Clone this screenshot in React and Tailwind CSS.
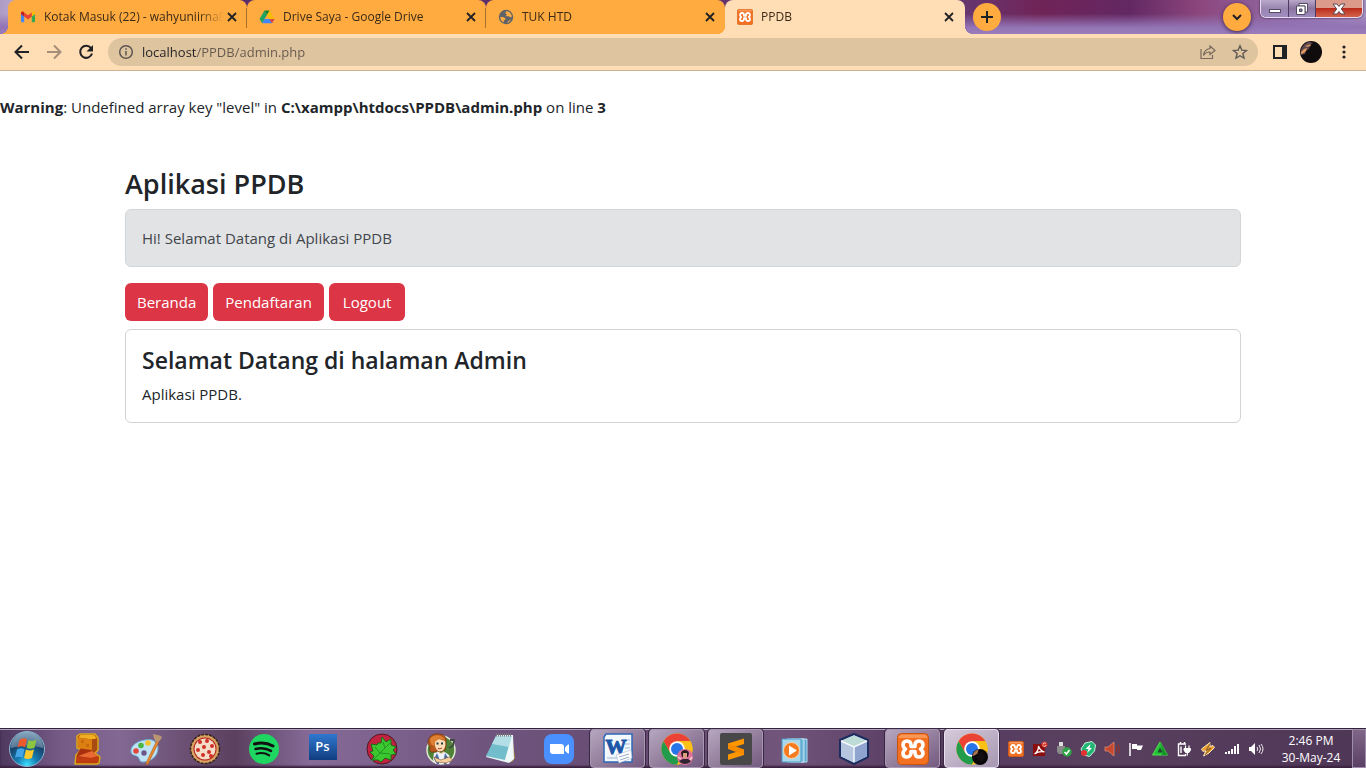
import React, { useState } from "react";

const TABS = [
  { id: 1, title: "Kotak Masuk (22) - wahyuniirna8", icon: GmailIcon },
  { id: 2, title: "Drive Saya - Google Drive", icon: DriveIcon },
  { id: 3, title: "TUK HTD", icon: GlobeIcon },
  { id: 4, title: "PPDB", icon: XamppIcon },
];

const APPS = [
  { name: "Game", icon: BlockIcon },
  { name: "Paint", icon: PaintIcon },
  { name: "Pizza", icon: PizzaIcon },
  { name: "Spotify", icon: SpotifyIcon },
  { name: "Photoshop", icon: PhotoshopIcon },
  { name: "Leaf", icon: LeafIcon },
  { name: "Dash", icon: GirlIcon },
  { name: "Notepad", icon: NotepadIcon },
  { name: "Zoom", icon: ZoomIcon },
  { name: "Word", icon: WordIcon, open: true },
  { name: "Chrome profile 1", icon: ChromePink, open: true },
  { name: "Sublime Text", icon: SublimeIcon, open: true },
  { name: "Media Player", icon: PlayerIcon },
  { name: "VirtualBox", icon: CubeIcon },
  { name: "XAMPP", icon: XamppIcon, open: true },
  { name: "Chrome profile 2", icon: ChromeDark, open: true, active: true },
];

const TRAY = [
  { name: "XAMPP", icon: XamppIcon },
  { name: "Acrobat", icon: AcrobatIcon },
  { name: "USB", icon: UsbIcon },
  { name: "Antivirus", icon: ShieldIcon },
  { name: "Audio manager", icon: RedSpeakerIcon },
  { name: "Action center", icon: FlagIcon },
  { name: "Triangle", icon: TriangleIcon },
  { name: "Power", icon: PlugIcon },
  { name: "Winamp", icon: BoltIcon },
  { name: "Network", icon: SignalIcon },
  { name: "Volume", icon: VolumeIcon },
];

function GmailIcon({ className }) {
  return (
    <svg viewBox="0 0 16 16" className={className}>
      <path d="M1 4v8.300c0 .5.4.9.9.9h2.300V7.300z" fill="#4285f4" />
      <path d="M11.800 7.300v5.900h2.300c.5 0 .9-.4.9-.9V4z" fill="#34a853" />
      <path d="M11.800 4v3.600L15 5.200V4c0-1.300-1.500-2-2.500-1.200z" fill="#fbbc04" />
      <path d="M4.200 7.600V3.500L8 6.300l3.800-2.800v4.100L8 10.400z" fill="#ea4335" />
      <path d="M1 4v1.200l3.200 2.400V3.500l-.7-.7C2.500 2 1 2.700 1 4z" fill="#c5221f" />
    </svg>
  );
}

function DriveIcon({ className }) {
  return (
    <svg viewBox="0 0 16 16" className={className}>
      <path d="M5.500 1.500h5l5 8.500h-5z" fill="#fbbc04" />
      <path d="M5.500 1.500L8 5.800 3.200 14.300 .5 10z" fill="#1ea362" />
      <path d="M5.500 1.500h5L8 5.800z" fill="#188038" />
      <path d="M5.500 10h10l-2.600 4.300H3.100z" fill="#4285f4" />
      <path d="M10.500 10h5l-2.600 4.300z" fill="#ea4335" />
    </svg>
  );
}

function GlobeIcon({ className }) {
  return (
    <svg viewBox="0 0 16 16" className={className}>
      <circle cx="8" cy="8" r="7.200" fill="#5f6368" />
      <path d="M2.300 8c2.400-.2 4.300.3 5 1.500.5 1-.2 1.600-1.400 1.700-.3.900.1 1.800-.4 2.200C3.600 12.500 2.200 10.500 2.300 8z" fill="#ffab40" />
      <path d="M8.300 2.200c2.900 0 5.300 2.300 5.500 5.300-.9 1.200-2 1-2.600 0-.8-.6-2.400.3-3-.6-.4-.8.700-1 .4-1.700-.4-.700-1.300-.6-1.200-1.500z" fill="#ffab40" />
      <path d="M9.500 13.800c-.3-.9.500-1.300 1.200-1.800.9-.4.800-1.300 2-1.400-.6 1.500-1.700 2.700-3.200 3.200z" fill="#ffab40" />
    </svg>
  );
}

function XamppIcon({ className }) {
  return (
    <svg viewBox="0 0 32 32" className={className}>
      <rect x=".5" y=".5" width="31" height="31" rx="4" fill="#f37021" stroke="#c9540f" />
      <path d="M1.500 5a4 4 0 014-3.500h21a4 4 0 014 3.500z" fill="#fba76b" opacity=".7" />
      <path
        d="M14 12.500c0-3-1.600-4.500-4-4.500S6 9.500 6 12s1.600 3.200 2.500 4C7.500 17 6 18 6 20.300S7.600 24 10 24s4-1.500 4-4.500v-1h4v1c0 3 1.600 4.500 4 4.500s4-1.500 4-3.700S24.500 17 23.500 16c1-.8 2.500-1.500 2.500-4s-1.600-4-4-4-4 1.500-4 4.500v1h-4z"
        fill="none"
        stroke="#fff"
        strokeWidth="3.600"
        strokeLinejoin="round"
      />
    </svg>
  );
}

function BlockIcon({ className }) {
  return (
    <svg viewBox="0 0 32 32" className={className}>
      <path d="M6 3l3-2h15l3 4v12l-3 3 5 4-1 6-2 1H4l1-9 3-3 1-3-3-1z" fill="#b03c0e" stroke="#d9a91f" strokeWidth="1.500" strokeLinejoin="round" />
      <path d="M7 4.500L9.500 2 23 2l3 3.500-5 1z" fill="#f0b024" />
      <path d="M7 4.500l14 2V17l-14-2z" fill="#dc8012" />
      <path d="M21 6.500l5-1V17l-5 2z" fill="#a84b10" />
      <path d="M9 16l12 2-12 6-3-2z" fill="#a9300f" />
      <path d="M7 23l14-5 6 5-7 2z" fill="#ea6a34" />
      <path d="M5.500 24l14 1 8-1-1 5.500h-21z" fill="#c23c12" />
      <path d="M10 7h3v3h-3zM15 11h3v3h-3z" fill="#c96a0f" />
    </svg>
  );
}

function PaintIcon({ className }) {
  return (
    <svg viewBox="0 0 32 32" className={className}>
      <path d="M15 7c7-2 13 2 13 8 0 8-7 14-15 14-4 0-3-3-5-5C6 22 2 23 1 19 0 13 7 8 15 7z" fill="#bfe2f5" stroke="#6baed6" strokeWidth="1" />
      <circle cx="6" cy="18" r="2.800" fill="#e2473b" />
      <circle cx="11" cy="12.500" r="2.800" fill="#4bb543" />
      <circle cx="18" cy="10" r="2.800" fill="#f5c32c" />
      <circle cx="14" cy="20" r="2.700" fill="#6d5688" />
      <path d="M27 7l2 1.500L18 31l-2 .5.3-2z" fill="#e8892d" stroke="#b9621a" strokeWidth=".6" />
      <path d="M25 8c-1-3-2-5-2-7 3 1 6 .5 9 3-1 2-2 4-4 5z" fill="#b99572" />
    </svg>
  );
}

function PizzaIcon({ className }) {
  return (
    <svg viewBox="0 0 32 32" className={className}>
      <circle cx="16" cy="16" r="14.500" fill="#d8a264" stroke="#38251a" strokeWidth="1.500" strokeDasharray="3 1" />
      <circle cx="16" cy="16" r="11.500" fill="#b5261c" />
      <circle cx="16" cy="16" r="10.500" fill="#f4dcc8" />
      {[[11, 9], [18, 8], [23, 13], [15, 14], [9, 17], [14, 22], [20, 19], [22, 23]].map(([x, y]) => (
        <circle key={`${x}-${y}`} cx={x} cy={y} r="2" fill="#cf2f28" />
      ))}
    </svg>
  );
}

function SpotifyIcon({ className }) {
  return (
    <svg viewBox="0 0 32 32" className={className}>
      <circle cx="16" cy="16" r="15" fill="#1ed760" />
      <g fill="none" stroke="#111" strokeLinecap="round">
        <path d="M6.500 11c6-1.800 13-1.200 18.500 2" strokeWidth="3" />
        <path d="M7.500 16c5-1.400 11-.8 15.500 1.900" strokeWidth="2.500" />
        <path d="M8.500 20.700c4-1 9-.6 12.700 1.700" strokeWidth="2" />
      </g>
    </svg>
  );
}

function PhotoshopIcon({ className }) {
  return (
    <svg viewBox="0 0 32 32" className={className}>
      <defs>
        <linearGradient id="ps" x1="0" y1="0" x2="0" y2="1">
          <stop offset="0" stopColor="#2f78cf" />
          <stop offset="1" stopColor="#123d80" />
        </linearGradient>
      </defs>
      <rect x="2" y="1" width="28" height="26" fill="url(#ps)" />
      <text x="15.500" y="18" textAnchor="middle" fontFamily="'Open Sans', sans-serif" fontWeight="600" fontSize="13" fill="#fff">Ps</text>
    </svg>
  );
}

function LeafIcon({ className }) {
  return (
    <svg viewBox="0 0 32 32" className={className}>
      <circle cx="16" cy="16" r="15" fill="#c2223f" stroke="#4f1721" />
      <path
        d="M16 4l4 5 5-3 0 6 5 2-3 3 3 4-5 1 0 5-6-2-4 4-3-2-6 0 2-4-4-4 3-1-2-7 6 1 1-2 3 0z"
        fill="#3cc62f"
        stroke="#176d1a"
        strokeWidth="1"
        strokeLinejoin="round"
      />
      <path d="M6 28L24 10M14 20l-5-6M14 20l10 1M19 15l-2-6" stroke="#1f9423" fill="none" />
    </svg>
  );
}

function GirlIcon({ className }) {
  return (
    <svg viewBox="0 0 32 32" className={className}>
      <circle cx="16" cy="17" r="14" fill="#4f8136" stroke="#dfe8d3" strokeWidth="1.500" />
      <path d="M3 10C3 3 9 0 14 1c5 0 8 3 7 9 0 4 0 7-3 8l-9 1c-3 1-5-1-4-4 1-2-2-2-2-5z" fill="#b8591c" stroke="#6b300f" strokeWidth=".7" />
      <path d="M10 8l4-2 6 2c1 4 0 8-3 10l-3 .5c-3-2-5-5-4-10.500z" fill="#fbdcb4" />
      <path d="M5 6C8 1 17 1 20 7l-6-1.500L10 9l-1 4c-3-1-4-4-4-7z" fill="#dd8034" />
      <path d="M11.500 10.500h2M16 10.500h2" stroke="#1f3a48" strokeWidth="2" />
      <path d="M13 15.500q2 1 4-.5" stroke="#a8392d" fill="none" />
      <path d="M12 18l4 2 3-2 0 3-6 0z" fill="#f1c596" />
      <path d="M9 20l4-1 3 2 4-2 4 3 2 5-2 4H11l-3-4z" fill="#eef3fa" />
      <path d="M12 20l2 5v6h-2l-3-5zM20 20l-1 5 0 6h2l3-5z" fill="#4c6da6" />
      <path d="M9 24l7 3 8-3 4 3-7 3-10-1z" fill="#f7cf9f" stroke="#7b5433" strokeWidth=".6" />
      <path d="M25 7h4l-1 6-4 2" fill="none" stroke="#3f4a42" strokeWidth="1.800" />
    </svg>
  );
}

function NotepadIcon({ className }) {
  return (
    <svg viewBox="0 0 32 32" className={className}>
      <path d="M28 3l3 22-3 4-5-1z" fill="#b8943f" />
      <path d="M13 2h16l1 24-5 4L2 24z" fill="#e8f4f5" />
      <path d="M12 3h16l-7 24-19-4z" fill="#71bdcb" />
      <path d="M12 3h16l-3 11L8 11z" fill="#b3dee5" />
      <path d="M28 3l-7 24 5 2 3-3z" fill="#eef8f8" />
      <path d="M12 2h16" stroke="#7b7b7b" strokeWidth="3" strokeDasharray="1 1" />
    </svg>
  );
}

function ZoomIcon({ className }) {
  return (
    <svg viewBox="0 0 32 32" className={className}>
      <rect x="1" y="1" width="30" height="30" rx="8" fill="#4a90ff" />
      <path d="M7 11h11a3 3 0 013 3v7H10a3 3 0 01-3-3zM22 14.500l3-3h1v9h-1l-3-2.500z" fill="#fff" />
    </svg>
  );
}

function WordIcon({ className }) {
  return (
    <svg viewBox="0 0 32 32" className={className}>
      <path d="M4 1h26v28H2V4z" fill="#f3f8fd" stroke="#2e68b5" strokeWidth="1.500" />
      <path d="M23 7h5M23 11h5M23 15h5M5 25h15" stroke="#9bb8d9" />
      <text x="14" y="21" textAnchor="middle" fontFamily="'Liberation Serif', serif" fontWeight="700" fontSize="21" fill="#1c56a7" stroke="#1c56a7">W</text>
      <path d="M14 22l15-5 1 8-13 5z" fill="#fff" stroke="#a6b7cf" strokeWidth=".6" />
      <path d="M17 24l10-3M18 27l9-3" stroke="#7994bd" strokeWidth=".8" />
    </svg>
  );
}

function ChromeIcon({ className, children }) {
  return (
    <svg viewBox="0 0 32 32" className={className}>
      <circle cx="16" cy="16" r="15.500" fill="#fbbc04" />
      <path d="M2.600 8.200A15.500 15.500 0 0129.400 8.200H16L9.300 20z" fill="#ea4335" />
      <path d="M2.600 8.200A15.500 15.500 0 0016 31.500L22.700 19.900 9.300 19.900z" fill="#229b4a" />
      <path d="M29.400 8.200H16v8l6.700 3.700L16 31.500A15.500 15.500 0 0029.400 8.200z" fill="#fbc116" />
      <circle cx="16" cy="16" r="7.800" fill="#fff" />
      <circle cx="16" cy="16" r="6" fill="#2775e8" />
      {children}
    </svg>
  );
}

function ChromePink({ className }) {
  return (
    <ChromeIcon className={className}>
      <circle cx="24" cy="24" r="8" fill="#df709b" />
      <path d="M20 20c1-4 7-4 8 0l-1 4h-6z" fill="#2b1920" />
      <path d="M22 20h4v4l-2 2-2-2z" fill="#dda07f" />
      <path d="M18 28l4-2 5 0 3 2c-3 4-9 4-12 0z" fill="#302532" />
      <path d="M17 24l3 2M29 27l2-3" stroke="#f1d8cf" strokeWidth="1.500" />
    </ChromeIcon>
  );
}

function ChromeDark({ className }) {
  return (
    <ChromeIcon className={className}>
      <circle cx="24" cy="24" r="8" fill="#090709" />
      <path d="M16.500 23c1-4 3-6 6-6.500l-1 4-3 2z" fill="#ad744b" />
      <path d="M20 25l3-5 4-1 2 5-3 6z" fill="#130d10" />
    </ChromeIcon>
  );
}

function SublimeIcon({ className }) {
  return (
    <svg viewBox="0 0 32 32" className={className}>
      <rect width="32" height="32" rx="2" fill="#484848" />
      <path d="M8 10.500L24 5.500v5.500L8 16zM8 21.500l16-5v5.500L8 27z" fill="#ff9800" />
      <path d="M8 10.500l16 6v5.500L8 16z" fill="#f78c00" />
    </svg>
  );
}

function PlayerIcon({ className }) {
  return (
    <svg viewBox="0 0 32 32" className={className}>
      <path d="M12 6h16v23H12z" fill="#5ba4cf" stroke="#afdcf2" />
      <path d="M8 6h17v23H8z" fill="#78bbdd" stroke="#c6e9f7" />
      <path d="M3 6h19v23H3z" fill="#a9d8ed" stroke="#4d9cc5" />
      <circle cx="12.500" cy="17.500" r="8" fill="#f47b20" stroke="#fbd6ae" />
      <path d="M10 12.500v10l8-5z" fill="#fff" />
    </svg>
  );
}

function CubeIcon({ className }) {
  return (
    <svg viewBox="0 0 32 32" className={className}>
      <path d="M16 1l14 6v17l-14 7-14-7V7z" fill="#d5e3ed" stroke="#1c2c5e" strokeWidth="2" strokeLinejoin="round" />
      <path d="M16 2.500L28.500 8 16 13.500 3.500 8z" fill="#bddbd7" />
      <path d="M3 8.500l13 5.500v15.500L3 23.500z" fill="#b6c6df" />
      <path d="M29 8.500L16 14v15.500l13-6z" fill="#8fa5cf" />
      <path d="M16 14v15M3 8l13 6 13-6" fill="none" stroke="#f4f8fb" strokeWidth="1.500" />
    </svg>
  );
}

function AcrobatIcon({ className }) {
  return (
    <svg viewBox="0 0 16 16" className={className}>
      <path d="M1 3h12v12H1z" fill="#8c0d0d" />
      <path d="M2.500 13c3-2 4-5 4-8 1 4 3 5 6 6-4-1-7 0-10 2z" fill="none" stroke="#fff" strokeWidth="1.200" />
      <circle cx="12.500" cy="3.500" r="3" fill="#d33529" />
      <path d="M11 3.500a1.600 1.600 0 013-.8M14 4a1.600 1.600 0 01-3 .5" fill="none" stroke="#fff" strokeWidth=".8" />
    </svg>
  );
}

function UsbIcon({ className }) {
  return (
    <svg viewBox="0 0 16 16" className={className}>
      <path d="M3 1h4v4H3z" fill="#ddd" />
      <path d="M1 5h8v8H3l-2-2z" fill="#8a8a8a" />
      <circle cx="11" cy="11" r="4.700" fill="#2ca443" />
      <path d="M8.500 11l2 2 3-4" fill="none" stroke="#fff" strokeWidth="1.500" />
    </svg>
  );
}

function ShieldIcon({ className }) {
  return (
    <svg viewBox="0 0 16 16" className={className}>
      <path d="M5 2l7-1.500 3.500 3.500-1 6-5 5.500L4 14 1 8z" fill="#22b573" stroke="#c9f2e0" strokeLinejoin="round" />
      <path d="M10.500 3L5.500 8h3L7 12l5-5H9.500z" fill="#fff" />
      <circle cx="4" cy="12" r="3" fill="#e43131" />
    </svg>
  );
}

function RedSpeakerIcon({ className }) {
  return (
    <svg viewBox="0 0 16 16" className={className}>
      <path d="M1 6h3l6-5v14l-6-5H1z" fill="#c6492f" stroke="#e99577" strokeWidth=".7" />
      <path d="M12 5q2 3 0 6M14 3q3 5 0 10" fill="none" stroke="#943427" />
    </svg>
  );
}

function FlagIcon({ className }) {
  return (
    <svg viewBox="0 0 16 16" className={className}>
      <path d="M2 2v13" stroke="#fff" strokeWidth="1.500" />
      <path d="M4 3h5v1.500h6L13 9H9V8H4z" fill="#fff" />
    </svg>
  );
}

function TriangleIcon({ className }) {
  return (
    <svg viewBox="0 0 16 16" className={className}>
      <path d="M8 1l7.500 13H.5z" fill="#25c337" stroke="#4fe04f" />
      <path d="M8 1l7.500 13H9l2-2z" fill="#159428" />
      <path d="M8 6.500l3 5H5.500z" fill="#1c4a2b" />
    </svg>
  );
}

function PlugIcon({ className }) {
  return (
    <svg viewBox="0 0 16 16" className={className}>
      <path d="M10 3H2.500v11.500h7V13M4.500 1v2M8.500 1v2" fill="none" stroke="#fff" strokeWidth="1.400" />
      <path d="M5 5.500v6.500" stroke="#fff" strokeWidth="1.400" />
      <path d="M8 7.500h6.500V9L13 11.500h-3.500L8 9z" fill="#fff" stroke="#fff" />
      <path d="M9.500 4.500V7M13 4.500V7M11.300 11.500v3" stroke="#fff" strokeWidth="1.200" />
    </svg>
  );
}

function BoltIcon({ className }) {
  return (
    <svg viewBox="0 0 16 16" className={className}>
      <path d="M10 1.500L1.500 8l1.500 2.500 3-1L3.500 15 9 12l5.500-5.500L13 4.500l-3 1z" fill="#efa02c" stroke="#f8e6bd" strokeWidth="1" />
      <path d="M10.500 2L6 9.500l5-2.500-6 7" stroke="#66482a" fill="none" strokeWidth=".8" />
    </svg>
  );
}

function SignalIcon({ className }) {
  return (
    <svg viewBox="0 0 16 16" className={className}>
      <path d="M1 11h2v2H1zM4 10h2v3H4zM7 8h2v5H7zM10 5h2v8h-2zM13 3h2v10h-2z" fill="#fff" />
    </svg>
  );
}

function VolumeIcon({ className }) {
  return (
    <svg viewBox="0 0 16 16" className={className}>
      <path d="M1 6h2l4-4v12l-4-4H1z" fill="#fff" />
      <path d="M9 6q1.500 2 0 4M11 4q3 4 0 8M13 3q4 5 0 10" fill="none" stroke="#fff" strokeWidth=".9" />
    </svg>
  );
}

function StartOrb() {
  return (
    <svg viewBox="0 0 38 38" className="h-[38px] w-[38px]">
      <defs>
        <radialGradient id="orb" cx=".5" cy=".95" r=".95">
          <stop offset="0" stopColor="#3fe0ff" />
          <stop offset=".3" stopColor="#157fb4" />
          <stop offset=".65" stopColor="#17426b" />
          <stop offset="1" stopColor="#5d8aa9" />
        </radialGradient>
      </defs>
      <circle cx="19" cy="19" r="17.500" fill="url(#orb)" stroke="#8fb5cf" />
      <path d="M3 18a16 16 0 0132 0q-16-5-32 0z" fill="#fff" opacity=".28" />
      <path d="M11.500 10q4-3 7.500-.5l-2 8q-4-2.500-7.500.2z" fill="#ee5a2b" />
      <path d="M20.500 10q4 2 8-.5l-2 8.200q-4 2-8 0z" fill="#8cc63e" />
      <path d="M9 19.500q4-2.500 7.500-.3l-2 8.500q-4-2-7.500.2z" fill="#42a5e8" />
      <path d="M18 19.500q4 2 8-.3l-2 8.500q-4 2.500-8 .2z" fill="#fcc92c" />
    </svg>
  );
}

function Stroke({ d, className, width = 2 }) {
  return (
    <svg viewBox="0 0 16 16" className={className} fill="none" stroke="currentColor" strokeWidth={width}>
      <path d={d} />
    </svg>
  );
}

function Tab({ tab, active, last, onSelect }) {
  const Icon = tab.icon;
  return (
    <div
      className={
        active
          ? "relative flex h-full w-[240px] items-center rounded-t-lg bg-[#ffddb5] pr-2 pl-3"
          : "relative flex h-full w-[239px] items-center rounded-t-lg bg-[#ffab40] pr-[7px] pl-3"
      }
    >
      {active && (
        <>
          <span className="absolute bottom-0 -left-2 h-2 w-2 bg-[radial-gradient(circle_at_0_0,transparent_8px,#ffddb5_8px)]" />
          <span className="absolute -right-2 bottom-0 h-2 w-2 bg-[radial-gradient(circle_at_100%_0,transparent_8px,#ffddb5_8px)]" />
        </>
      )}
      {tab.id === 1 && (
        <span className="absolute bottom-0 -left-2 h-2 w-2 bg-[radial-gradient(circle_at_0_0,transparent_8px,#ffab40_8px)]" />
      )}
      <button type="button" onClick={onSelect} className="flex min-w-0 flex-1 items-center gap-2 text-left">
        <Icon className="h-4 w-4 shrink-0" />
        <span className="flex-1 overflow-hidden text-xs whitespace-nowrap text-[#3a2a17] [mask-image:linear-gradient(90deg,#000_86%,transparent)]">
          {tab.title}
        </span>
      </button>
      <button type="button" aria-label={`Close ${tab.title}`} className="flex h-4 w-4 items-center justify-center text-[#202124]">
        <Stroke d="M4 4l8 8M12 4l-8 8" className="h-4 w-4" width={1.8} />
      </button>
      {!active && !last && <span className="absolute top-2 right-0 h-5 w-px bg-[#a8722d]" />}
    </div>
  );
}

function WindowControls() {
  return (
    <div className="mr-[3px] flex h-[18px] self-start overflow-hidden rounded-b-md border border-t-0 border-[#eadcf0] shadow-[0_0_2px_#1d1228]">
      <button type="button" aria-label="Minimize" className="flex w-7 items-center justify-center border-r border-[#4c3b62] bg-linear-to-b from-[#b9a8c9] via-[#9a86b0] to-[#9f8cc0]">
        <span className="mt-1 h-1 w-3 border border-[#554c63] bg-white" />
      </button>
      <button type="button" aria-label="Restore" className="flex w-[27px] items-center justify-center border-r border-[#4c3b62] bg-linear-to-b from-[#b9a8c9] via-[#8b749f] to-[#9f8cc0]">
        <svg viewBox="0 0 14 14" className="h-[14px] w-[14px]" fill="none">
          <path d="M4 1.500h8.500V10H10V4H4z" fill="#fff" stroke="#554c63" />
          <path d="M1.500 4h8.500v8.500H1.500z" fill="#fff" stroke="#554c63" />
          <path d="M4.500 7h2.500v2.500H4.500z" fill="#8b749f" stroke="#554c63" />
        </svg>
      </button>
      <button type="button" aria-label="Close window" className="flex w-[46px] items-center justify-center bg-linear-to-b from-[#dc9a8a] from-45% via-[#bb2a1a] via-50% to-[#d4634a]">
        <svg viewBox="0 0 14 12" className="h-3 w-[14px]">
          <path d="M1 1h4l2 2.500L9 1h4L9.300 6l3.700 5H9L7 8.500 5 11H1l3.700-5z" fill="#fff" stroke="#5b4652" />
        </svg>
      </button>
    </div>
  );
}

function Toolbar() {
  const [url, setUrl] = useState("localhost/PPDB/admin.php");
  return (
    <div className="flex h-[37px] shrink-0 items-center border-b border-[#cdb192] bg-[#ffddb5] px-3 text-[#202124]">
      <button type="button" aria-label="Back" className="flex w-5 justify-center">
        <Stroke d="M15 8H2M8 1.500L1.500 8 8 14.500" className="h-4 w-4" />
      </button>
      <button type="button" aria-label="Forward" disabled className="ml-3 flex w-5 justify-center text-[#a48e78]">
        <Stroke d="M1 8h13M8 1.500L14.500 8 8 14.500" className="h-4 w-4" />
      </button>
      <button type="button" aria-label="Reload" className="ml-3 flex w-5 justify-center">
        <svg viewBox="0 0 16 16" className="h-4 w-4">
          <path d="M13 4.200A6 6 0 1014 9.500" fill="none" stroke="currentColor" strokeWidth="2" />
          <path d="M15 1v6.500H8.500z" fill="currentColor" />
        </svg>
      </button>
      <div className="ml-3 flex h-7 flex-1 items-center rounded-full bg-[#dfc4a0] px-[10px] text-[#5f6368]">
        <button type="button" aria-label="Site information">
          <svg viewBox="0 0 16 16" className="h-4 w-4" fill="none" stroke="#5b5650" strokeWidth="1.500">
            <circle cx="8" cy="8" r="6.300" />
            <path d="M8 7v4.500M8 4.200v1.600" />
          </svg>
        </button>
        <input
          aria-label="Address"
          value={url}
          onChange={(e) => setUrl(e.target.value)}
          className="ml-2 min-w-0 flex-1 bg-[linear-gradient(90deg,#202124_55px,#65594c_55px)] bg-clip-text pt-px text-[13px] text-transparent outline-none"
        />
        <button type="button" aria-label="Share">
          <svg viewBox="0 0 16 16" className="h-4 w-4" fill="none" stroke="#77695b" strokeWidth="1.200">
            <path d="M1 5v9.500h11.500V11" />
            <path d="M10 2l5 4.500-5 4V8C7 8 5 9 3.500 11.500 4 7.500 6 5 10 4.500z" />
          </svg>
        </button>
        <button type="button" aria-label="Bookmark" className="ml-4">
          <svg viewBox="0 0 16 16" className="h-4 w-4" fill="none" stroke="#5f5b57" strokeWidth="1.400">
            <path d="M8 1.800l1.800 4.300 4.700.4-3.600 3 1.100 4.600L8 11.700 4 14.100l1.100-4.600-3.600-3 4.700-.4z" />
          </svg>
        </button>
      </div>
      <button type="button" aria-label="Side panel" className="ml-[14px]">
        <svg viewBox="0 0 16 16" className="h-4 w-4">
          <path d="M1 1h14v14H1zM3 3v10h7V3z" fill="currentColor" fillRule="evenodd" />
        </svg>
      </button>
      <button type="button" aria-label="Profile" className="ml-3">
        <svg viewBox="0 0 22 22" className="h-[22px] w-[22px]">
          <circle cx="11" cy="11" r="11" fill="#100b0d" />
          <path d="M1 9C2 5 5 2 9 .5l4 1.500-3 2-1 4-3 2-1 3-4 1C0 13 .5 10 1 9z" fill="#5c4650" />
          <path d="M1 11l3-3 3-1-1 3-2 2-3 1z" fill="#e0995a" />
          <path d="M5 5l5-2 1 2-4 1z" fill="#c48a5c" />
        </svg>
      </button>
      <button type="button" aria-label="Menu" className="ml-3 flex w-5 justify-center">
        <svg viewBox="0 0 16 16" className="h-4 w-4" fill="currentColor">
          <circle cx="8" cy="3" r="1.600" />
          <circle cx="8" cy="8" r="1.600" />
          <circle cx="8" cy="13" r="1.600" />
        </svg>
      </button>
    </div>
  );
}

function Page() {
  return (
    <main className="flex-1 overflow-auto bg-white pt-6 text-[15px] leading-6 text-[#212529]">
      <p>
        <b>Warning</b>: Undefined array key "level" in <b>C:\xampp\htdocs\PPDB\admin.php</b> on line <b>3</b>
      </p>
      <div className="mx-auto mt-12 max-w-[1140px] px-3">
        <h3 className="mb-2 text-[27px] leading-[34px] font-semibold">Aplikasi PPDB</h3>
        <div role="alert" className="mb-4 rounded-md border border-[#d3d6d8] bg-[#e2e3e5] p-4 text-[#41464b]">
          Hi! Selamat Datang di Aplikasi PPDB
        </div>
        <nav className="flex gap-[5px] text-white">
          <a href="#beranda" className="rounded-md bg-[#dc3545] px-3 py-[7px]">Beranda</a>
          <a href="#pendaftaran" className="rounded-md bg-[#dc3545] px-3 py-[7px]">Pendaftaran</a>
          <a href="#logout" className="rounded-md bg-[#dc3545] px-[14px] py-[7px]">Logout</a>
        </nav>
        <div className="mt-2 rounded-md border border-[#d2d3d4] p-4">
          <h4 className="mb-2 text-[23px] leading-7 font-semibold">Selamat Datang di halaman Admin</h4>
          <p>Aplikasi PPDB.</p>
        </div>
      </div>
    </main>
  );
}

function Taskbar() {
  return (
    <footer className="flex h-10 shrink-0 items-stretch border-t border-[#30243b] bg-[linear-gradient(90deg,#4d385e_0,#755a86_60px,#836893_120px,#6d5276_180px,#5b4060_235px,#866b98_310px,#70567f_480px,#65496f_650px,#72557a_780px,#563b60_920px,#59405f_1100px,#4e3657_1366px)] shadow-[inset_0_1px_0_#b5a2c2,inset_0_-2px_2px_#39213f]">
      <button type="button" aria-label="Start" className="ml-2 flex w-[38px] items-center justify-center">
        <StartOrb />
      </button>
      <div className="ml-[13px] flex gap-1">
        {APPS.map(({ name, icon: Icon, open, active }) => (
          <button
            key={name}
            type="button"
            aria-label={name}
            className={
              active
                ? "flex w-[55px] items-center justify-center rounded-sm border border-[#e8dfee] bg-linear-to-br from-[#d6cadb] to-[#a797b1] shadow-[0_0_0_1px_#382843]"
                : open
                  ? "flex w-[55px] items-center justify-center rounded-sm border border-[#a998b3] bg-linear-to-br from-[#b7a7be] to-[#745a80] shadow-[0_0_0_1px_#382843]"
                  : "flex w-[55px] items-center justify-center"
            }
          >
            <Icon className="h-8 w-8" />
          </button>
        ))}
      </div>
      <div className="ml-auto flex items-center gap-2">
        {TRAY.map(({ name, icon: Icon }) => (
          <button key={name} type="button" aria-label={name}>
            <Icon className="h-4 w-4" />
          </button>
        ))}
      </div>
      <div className="ml-[10px] flex w-[74px] flex-col justify-center text-center text-xs leading-[17px] whitespace-nowrap text-white">
        <time>2:46 PM</time>
        <time>30-May-24</time>
      </div>
      <button type="button" aria-label="Show desktop" className="ml-1 w-[14px] border border-[#a08cab] bg-linear-to-b from-[#806788] to-[#5b4065]" />
    </footer>
  );
}

export default function App() {
  const [activeTab, setActiveTab] = useState(4);

  return (
    <div className="flex h-screen flex-col overflow-hidden font-['Open_Sans','Noto_Sans',sans-serif]">
      <header className="flex h-[34px] shrink-0 items-center bg-[linear-gradient(0deg,#9c7dbb_0,#9273b4_20%,transparent_60%),linear-gradient(90deg,#ad9bc4_0,#b6a2c9_10px,#542b6b_100px,#67366f_965px,#702457_1040px,#632863_1130px,#8c477d_1200px,#9270ac_1300px,#a58fc0_1366px)] pl-2">
        {TABS.map((tab, i) => (
          <Tab
            key={tab.id}
            tab={tab}
            active={tab.id === activeTab}
            last={i + 1 < TABS.length && TABS[i + 1].id === activeTab}
            onSelect={() => setActiveTab(tab.id)}
          />
        ))}
        <button type="button" aria-label="New tab" className="ml-2 flex h-7 w-7 items-center justify-center rounded-full bg-[#ffab40] text-[#202124]">
          <Stroke d="M8 2v12M2 8h12" className="h-4 w-4" />
        </button>
        <button type="button" aria-label="Search tabs" className="mr-[9px] ml-auto flex h-7 w-7 items-center justify-center rounded-full bg-[#ffab40] text-[#202124] shadow-[0_1px_4px_#38204a]">
          <Stroke d="M4 6l4 4 4-4" className="h-4 w-4" />
        </button>
        <WindowControls />
      </header>
      <Toolbar />
      <Page />
      <Taskbar />
    </div>
  );
}
